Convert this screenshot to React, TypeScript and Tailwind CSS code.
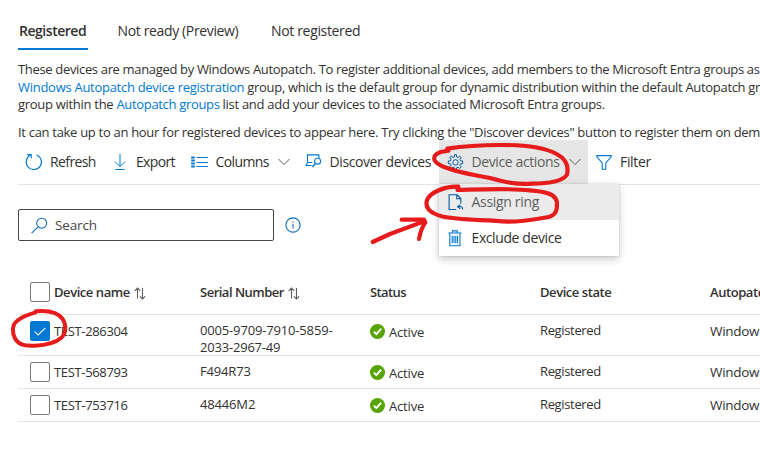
import type { ReactNode } from "react";

const BLUE = "#0078d4";

function RefreshIcon() {
  return (
    <svg width="18" height="18" viewBox="0 0 18 18" fill="none" stroke={BLUE} strokeWidth="1.1">
      <path d="M11.6 1.9A7.6 7.6 0 1 1 5.6 2.1" />
      <path d="M2.2 1.6H6.2v4" />
    </svg>
  );
}

function ExportIcon() {
  return (
    <svg width="12" height="18" viewBox="0 0 12 18" fill="none" stroke={BLUE} strokeWidth="1">
      <path d="M6 .8v12.6M1 8.6l5 5 5-5M1.2 16.5h9.4" />
    </svg>
  );
}

function ColumnsIcon() {
  return (
    <svg width="17" height="12" viewBox="0 0 17 12" fill="none" stroke={BLUE}>
      <path d="M5.5 1.5H17M5.5 6.5H17M5.5 10.5H17" strokeWidth="1.1" />
      <path d="M.2 1.5h3.6M.2 4.5h3.6M.2 7.5h3.6M.2 10.5h3.6" strokeWidth="1.9" />
    </svg>
  );
}

function DiscoverIcon() {
  return (
    <svg width="17" height="14" viewBox="0 0 17 14" fill="none" stroke={BLUE} strokeWidth="1.1">
      <path d="M6.6 11.5H.8l2.1-3h4.4M2.5 8.5V.9h11.4v3.2" />
      <circle cx="12.6" cy="7.3" r="3" />
      <path d="M10.5 9.6 7.4 12.9" strokeWidth="1.4" />
    </svg>
  );
}

function Chevron() {
  return (
    <svg width="12" height="8" viewBox="0 0 12 8" fill="none" stroke="#605e5c" strokeWidth="1">
      <path d="M.5 1 6 6.6 11.5 1" />
    </svg>
  );
}

function GearIcon() {
  return (
    <svg width="17" height="17" viewBox="0 0 17 17" fill="none" stroke="#005a9e" strokeWidth="1" strokeLinejoin="round">
      <path d="M7.4 2.9 7.6.7h1.8l.2 2.2 1.4.6 1.7-1.4 1.6 1.6-1.4 1.7.6 1.4 2.2.2v2.6l-2.2.2-.6 1.4 1.4 1.7-1.6 1.6-1.7-1.4-1.4.6-.2 2.2H7.6l-.2-2.2-1.4-.6-1.7 1.4-1.6-1.6 1.4-1.7-.6-1.4-2.2-.2V7l2.2-.2.6-1.4-1.4-1.7 1.6-1.6L6 3.5z" />
      <circle cx="8.5" cy="8.4" r="2.7" />
    </svg>
  );
}

function FilterIcon() {
  return (
    <svg width="16" height="15" viewBox="0 0 16 15" fill="none" stroke={BLUE} strokeWidth="1.1">
      <path d="M.8.6h14.4v1.3L9.8 8v6.2H6.2V8L.8 1.9z" />
    </svg>
  );
}

function PageIcon() {
  return (
    <svg width="16" height="17" viewBox="0 0 16 17" fill="none" stroke="#005a9e" strokeWidth="1.1">
      <path d="M8.2 15.5H1.1V.8H9l3.8 3.8v5.2M8.8.8v4h4" />
      <path d="M12.3 10.8l-2.6 2 2.6 2M9.9 12.8h3.4q1.2 0 1.2 1.2v1.6" />
    </svg>
  );
}

function TrashIcon() {
  return (
    <svg width="14" height="17" viewBox="0 0 14 17" fill="none" stroke={BLUE} strokeWidth="1.1">
      <path d="M.3 3h13.2M4.5 3V.9h4.8V3M1.8 3v12.8H12V3" />
      <path d="M4.2 5.8v7.4M6 5.8v7.4M7.8 5.8v7.4M9.6 5.8v7.4" />
    </svg>
  );
}

function SearchIcon() {
  return (
    <svg width="17" height="17" viewBox="0 0 17 17" fill="none" stroke="#0f6cbd" strokeWidth="1.1">
      <circle cx="10.7" cy="6.2" r="5" />
      <path d="M7.1 9.8.6 16.2" />
    </svg>
  );
}

function InfoIcon() {
  return (
    <svg width="16" height="16" viewBox="0 0 16 16" fill="none" stroke="#0f6cbd" strokeWidth="1.1">
      <circle cx="8" cy="8" r="7.1" />
      <path d="M8 6.8v4.6M8 4.3v1.2" />
    </svg>
  );
}

function SortIcon() {
  return (
    <svg width="12" height="13" viewBox="0 0 12 13" fill="none" stroke="#605e5c" strokeWidth="1.1">
      <path d="M3.5 11.5V1M.7 3.8 3.5 1l2.8 2.8M8.5 1v10.9M5.9 9.3l2.6 2.6 2.6-2.6" />
    </svg>
  );
}

function ActiveIcon() {
  return (
    <svg width="15" height="15" viewBox="0 0 15 15" fill="none">
      <circle cx="7.5" cy="7.5" r="7.5" fill="#57a300" />
      <path d="M3.8 7.6 6.4 10.2 11.2 4.7" stroke="#fff" strokeWidth="1.9" />
    </svg>
  );
}

function Checkbox({ checked = false }: { checked?: boolean }) {
  return checked ? (
    <span className="flex size-5 items-center justify-center rounded-xs bg-[#0078d4]">
      <svg width="12" height="9" viewBox="0 0 12 9" fill="none" stroke="#fff" strokeWidth="1.1">
        <path d="M.7 4.6 4.1 8 11.4.8" />
      </svg>
    </span>
  ) : (
    <span className="block size-5 rounded-xs border border-[#7a7876] bg-white" />
  );
}

function Link({ children, className = "" }: { children: ReactNode; className?: string }) {
  return <a className={`text-[#0078d4] ${className}`}>{children}</a>;
}

const GRID = "grid w-[742px] grid-cols-[36px_146px_170px_170px_170px_50px] border-b border-[#e4e4e4]";

type Device = { name: string; serial: string[]; checked?: boolean };

const devices: Device[] = [
  { name: "TEST-286304", serial: ["0005-9709-7910-5859-", "2033-2967-49"], checked: true },
  { name: "TEST-568793", serial: ["F494R73"] },
  { name: "TEST-753716", serial: ["48446M2"] },
];

function Row({ name, serial, checked }: Device) {
  return (
    <div className={`${GRID} pt-1.5 leading-[17px] ${checked ? "h-[41px]" : "h-[33px]"}`}>
      <div className="pl-3"><Checkbox checked={checked} /></div>
      <div className="pt-[2px] tracking-[-0.34px]">{name}</div>
      <div className="pt-px">
        <div className="tracking-[-0.16px]">{serial[0]}</div>
        {serial[1] && <div className="tracking-[-0.2px]">{serial[1]}</div>}
      </div>
      <div className="flex items-start gap-1 pt-[3px] tracking-[-0.17px]">
        <ActiveIcon />
        <span>Active</span>
      </div>
      <div className="pt-px tracking-[-0.35px]">Registered</div>
      <div className="pt-[2px] text-[13.5px] tracking-[-0.3px]">Window</div>
    </div>
  );
}

export default function App() {
  return (
    <div className="relative h-[459px] w-[760px] overflow-hidden bg-white font-['Open_Sans','Noto_Sans',sans-serif] text-[13px] whitespace-nowrap text-[#323130]">
      <div className="pl-[18px]">
        <div className="flex h-[50px] items-end text-sm">
          <div className="h-[30px] w-[70px] border-b-2 border-[#0078d4] pl-px leading-[21px] font-semibold tracking-[-0.47px]">Registered</div>
          <div className="ml-[29.5px] h-[30px] w-[153.5px] leading-[21px] tracking-[-0.36px]">Not ready (Preview)</div>
          <div className="h-[30px] leading-[21px] tracking-[-0.34px]">Not registered</div>
        </div>

        <div className="h-[90px] pt-[11px] leading-[17.5px]">
          <p className="tracking-[-0.335px]">
            These devices are managed by Windows Autopatch. To register additional devices, add members to the Microsoft Entra groups as
          </p>
          <p className="tracking-[-0.315px]">
            <Link className="tracking-[-0.28px]">Windows Autopatch device registration</Link> group, which is the default group for dynamic distribution within the default Autopatch gr
          </p>
          <p className="tracking-[-0.29px]">
            group within the <Link className="tracking-[-0.33px]">Autopatch groups</Link> list and add your devices to the associated Microsoft Entra groups.
          </p>
          <p className="pt-[10.5px] tracking-[-0.303px]">
            It can take up to an hour for registered devices to appear here. Try clicking the "Discover devices" button to register them on dem
          </p>
        </div>
      </div>

      <div className="ml-[18px] flex h-[45px] items-center border-b border-[#e4e4e4] text-sm leading-5">
        <div className="flex w-[95px] items-center gap-[7px] pl-[7px] tracking-[-0.6px]">
          <RefreshIcon />
          <span>Refresh</span>
        </div>
        <div className="flex w-[78px] items-center gap-[10px] pl-px tracking-[-0.66px]">
          <ExportIcon />
          <span>Export</span>
        </div>
        <div className="flex w-[114px] items-center tracking-[-0.62px]">
          <ColumnsIcon />
          <span className="ml-[7.5px] w-[62.5px]">Columns</span>
          <Chevron />
        </div>
        <div className="flex w-[134px] items-center tracking-[-0.4px]">
          <span className="mt-[-3px] w-[24.5px]"><DiscoverIcon /></span>
          <span>Discover devices</span>
        </div>
        <div className="flex h-[44px] w-[149px] items-center bg-[#e6e6e6] pl-2 tracking-[-0.39px] text-[#605e5c]">
          <GearIcon />
          <span className="ml-[7.5px] w-[97px]">Device actions</span>
          <Chevron />
        </div>
        <div className="flex items-center gap-[8px] pl-2 tracking-[-0.33px]">
          <FilterIcon />
          <span>Filter</span>
        </div>
      </div>

      <div className="flex items-center gap-[11px] pt-6 pl-[18px]">
        <div className="flex h-8 w-[256px] items-center gap-[7px] rounded-xs border border-[#484644] pl-3 text-[13.5px] tracking-[-0.15px] text-[#484644]">
          <SearchIcon />
          <span>Search</span>
        </div>
        <InfoIcon />
      </div>

      <div className="mt-[29px] ml-[18px]">
        <div className={`${GRID} h-[45px] items-center font-semibold`}>
          <div className="pl-3"><Checkbox /></div>
          <div className="flex items-center gap-1 pt-[2px] tracking-[-0.44px]">Device name <SortIcon /></div>
          <div className="flex items-center gap-1 pt-[2px] tracking-[-0.5px]">Serial Number <SortIcon /></div>
          <div className="pt-[2px] tracking-[-0.6px]">Status</div>
          <div className="pt-[2px] tracking-[-0.44px]">Device state</div>
          <div className="pt-[2px] tracking-[-0.44px]">Autopatc</div>
        </div>
        {devices.map((d) => <Row key={d.name} {...d} />)}
      </div>

      {/* Device actions menu */}
      <div className="absolute top-[184px] left-[439px] w-[180px] bg-white text-sm shadow-[0_3px_8px_rgba(0,0,0,0.22),0_0_2px_rgba(0,0,0,0.14)]">
        <div className="flex h-9 items-center gap-[7.5px] bg-[#ebebeb] pl-[9px] tracking-[-0.32px] text-[#605e5c]">
          <PageIcon />
          <span>Assign ring</span>
        </div>
        <div className="flex h-9 items-center gap-[9.5px] pl-[9px] tracking-[-0.4px]">
          <TrashIcon />
          <span>Exclude device</span>
        </div>
      </div>

      {/* Hand-drawn red markup */}
      <svg className="pointer-events-none absolute inset-0" width="760" height="459" viewBox="0 0 760 459" fill="none" stroke="#e61b1b" strokeLinecap="round" strokeLinejoin="round">
        <g transform="translate(360 140) scale(.33333)" strokeWidth="12.5">
          <path d="M265 32L262 26C300 20 360 15 420 15C500 14 555 23 590 42C620 58 626 82 621 104C606 127 560 131 515 131C465 134 435 126 390 114C330 103 270 92 240 75C215 60 218 45 242 36L265 32" />
          <path d="M293 150L295 140C255 138 210 157 201 180C194 205 212 220 245 229C300 242 360 238 445 245C490 245 525 238 566 231C592 224 591 205 591 187C587 162 560 155 510 151C440 144 365 148 293 150" />
          <path d="M38 306L90 282L192 244M125 239L192 239L196 247C185 263 180 280 177 297" />
        </g>
        <g transform="translate(0 270) scale(.33333)" strokeWidth="12">
          <path d="M107 127C85 133 67 139 51 153C35 165 36 190 46 207C57 226 78 228 105 227C140 225 166 219 184 203C200 189 198 162 188 147C173 126 140 121 107 124" />
        </g>
      </svg>
    </div>
  );
}
